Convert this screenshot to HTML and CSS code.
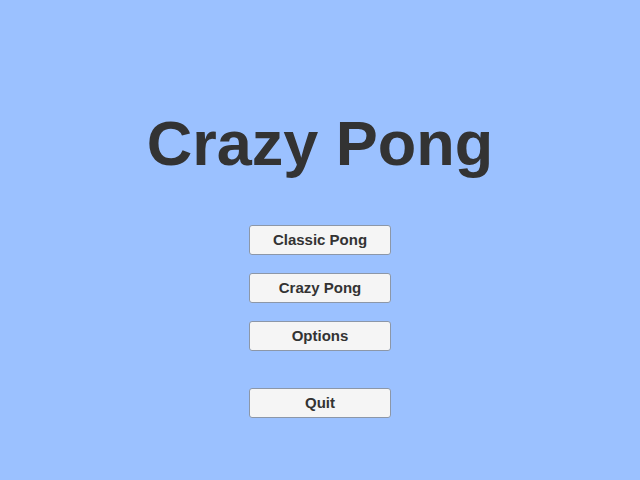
FILE: index.html
```html
<!DOCTYPE html>
<html>
<head>
<meta charset="utf-8">
<link rel="stylesheet" href="styles.css">
</head>
<body>
<main class="menu">
  <h1 class="title">Crazy Pong</h1>
  <div class="buttons">
    <button class="btn">Classic Pong</button>
    <button class="btn">Crazy Pong</button>
    <button class="btn">Options</button>
    <button class="btn quit">Quit</button>
  </div>
</main>
</body>
</html>
```

FILE: styles.css
```css
html, body {
  margin: 0;
  padding: 0;
  width: 640px;
  height: 480px;
  background: #9bc1ff;
  overflow: hidden;
}
.menu {
  display: flex;
  flex-direction: column;
  align-items: center;
  padding-top: 112px;
  font-family: "Liberation Sans", Arial, sans-serif;
}
.title {
  margin: 0;
  font-size: 63px;
  line-height: 63px;
  font-weight: bold;
  color: #333333;
}
.buttons {
  display: flex;
  flex-direction: column;
  align-items: center;
  gap: 18px;
  margin-top: 50px;
}
.btn {
  box-sizing: border-box;
  width: 142px;
  height: 30px;
  margin: 0;
  padding: 0 0 1px;
  border: 1px solid #8c97a8;
  border-radius: 3px;
  background: #f5f5f5;
  color: #333333;
  font-family: "Liberation Sans", Arial, sans-serif;
  font-weight: bold;
  font-size: 15px;
  display: flex;
  align-items: center;
  justify-content: center;
}
.quit {
  margin-top: 19px;
}
```
